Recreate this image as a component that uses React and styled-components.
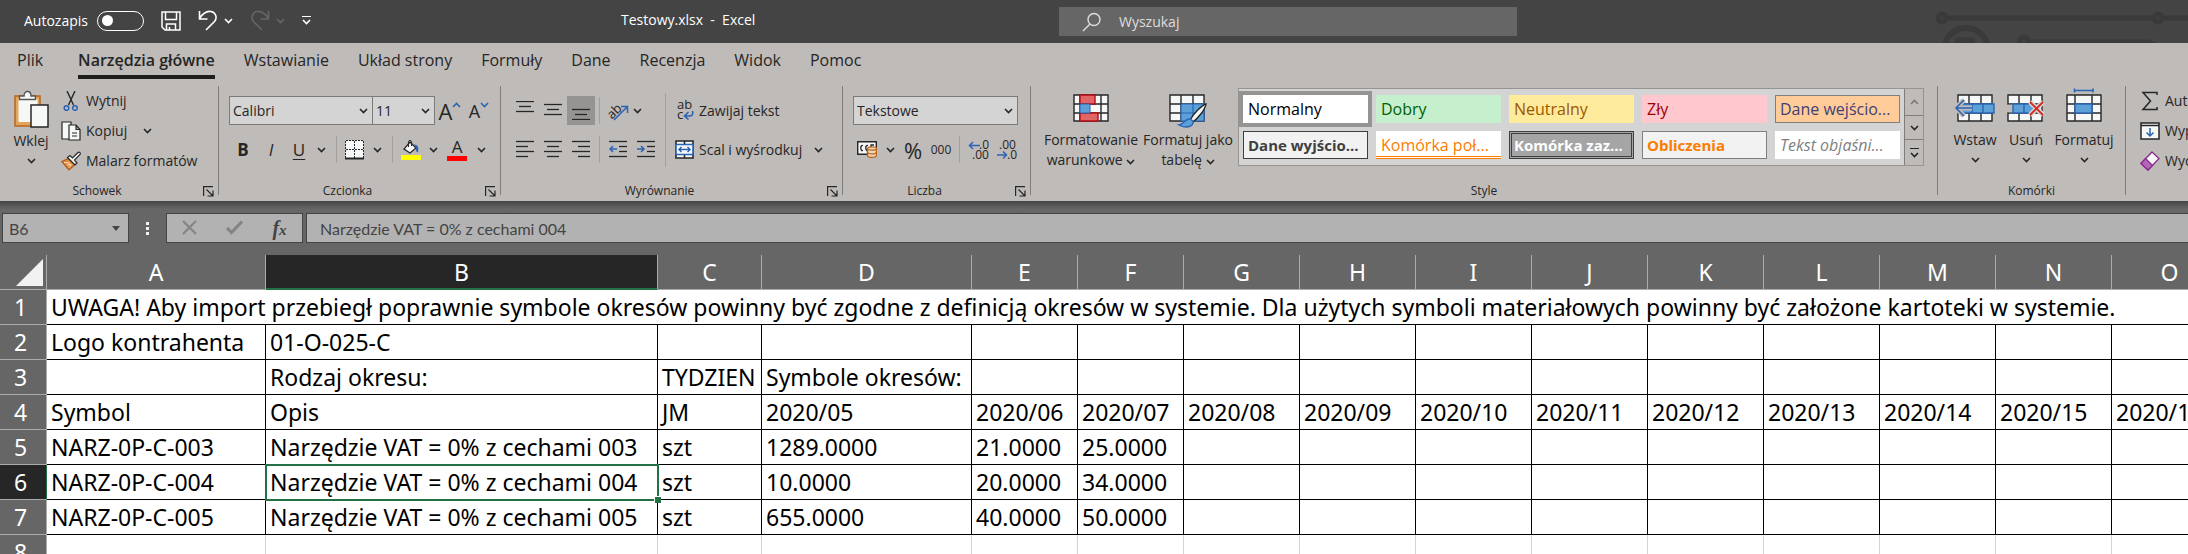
import styled, { createGlobalStyle, css } from "styled-components";

const INK = "#262626";
const BLUE = "#2b64b5";

const columns = [
  { name: "A", width: 219 },
  { name: "B", width: 392 },
  { name: "C", width: 104 },
  { name: "D", width: 210 },
  { name: "E", width: 106 },
  { name: "F", width: 106 },
  ..."GHIJKLMNO".split("").map((name) => ({ name, width: 116 })),
];

const note =
  "UWAGA! Aby import przebiegł poprawnie symbole okresów powinny być zgodne z definicją okresów w systemie. Dla użytych symboli materiałowych powinny być założone kartoteki w systemie.";

const rows = [
  ["Logo kontrahenta", "01-O-025-C"],
  ["", "Rodzaj okresu:", "TYDZIEN", "Symbole okresów:"],
  [
    "Symbol",
    "Opis",
    "JM",
    ...Array.from({ length: 12 }, (_, i) => `2020/${String(i + 5).padStart(2, "0")}`),
  ],
  ["NARZ-0P-C-003", "Narzędzie VAT = 0% z cechami 003", "szt", "1289.0000", "21.0000", "25.0000"],
  ["NARZ-0P-C-004", "Narzędzie VAT = 0% z cechami 004", "szt", "10.0000", "20.0000", "34.0000"],
  ["NARZ-0P-C-005", "Narzędzie VAT = 0% z cechami 005", "szt", "655.0000", "40.0000", "50.0000"],
];

const tabs = [
  "Plik",
  "Narzędzia główne",
  "Wstawianie",
  "Układ strony",
  "Formuły",
  "Dane",
  "Recenzja",
  "Widok",
  "Pomoc",
];

const cellStyles = [
  { label: "Normalny", color: "#000", bg: "#fff", selected: true },
  { label: "Dobry", color: "#006100", bg: "#c6efce" },
  { label: "Neutralny", color: "#9c5700", bg: "#ffeb9c" },
  { label: "Zły", color: "#9c0006", bg: "#ffc7ce" },
  { label: "Dane wejścio...", color: "#3f3f76", bg: "#ffcc99", frame: "1px solid #7f7f7f" },
  { label: "Dane wyjścio...", color: "#3f3f3f", bg: "#f2f2f2", frame: "1px solid #3f3f3f", bold: true },
  { label: "Komórka poł...", color: "#fa7d00", bg: "#fff", underline: true },
  { label: "Komórka zaz...", color: "#fff", bg: "#a5a5a5", frame: "3px double #3f3f3f", bold: true },
  { label: "Obliczenia", color: "#fa7d00", bg: "#f2f2f2", frame: "1px solid #7f7f7f", bold: true },
  { label: "Tekst objaśni...", color: "#7f7f7f", bg: "#fff", italic: true },
];

function Chevron({ color = INK, up }) {
  return (
    <svg width="9" height="6" viewBox="0 0 9 6" fill="none" stroke={color} strokeWidth="1.6">
      <path d={up ? "M1 5l3.5-3.5L8 5" : "M1 1l3.5 3.5L8 1"} />
    </svg>
  );
}

function SaveIcon() {
  return (
    <svg width="20" height="20" viewBox="0 0 20 20" fill="none" stroke="#fff" strokeWidth="1.5">
      <path d="M1 1h18v18H4l-3-3zM4.500 1v7.500h11V1M5.500 19v-6h9v6M8.500 19v-3" />
    </svg>
  );
}

function UndoIcon({ flip, color }) {
  return (
    <svg width="20" height="21" viewBox="0 0 20 21" fill="none" stroke={color} strokeWidth="1.6">
      <g transform={flip ? "matrix(-1 0 0 1 20 0)" : undefined}>
        <path d="M1.500 1v8h8M1.500 8.500C5 3 9 .8 13 1.500c5 1 6.500 6.500 3.500 10L8 20" />
      </g>
    </svg>
  );
}

function PasteIcon() {
  return (
    <svg width="36" height="39" viewBox="0 0 36 39">
      <path d="M2 6h25v30H2z" fill="#e3a55c" stroke="#b8661c" strokeWidth="1.5" />
      <path d="M5.500 9h19v23h-19z" fill="#f5f8f7" />
      <path d="M6.500 9.500V6h4.500c0-6 7-6 7 0h4.500v3.500z" fill="#f5f8f7" stroke="#555" strokeWidth="1.400" />
      <path d="M18 15h17v22H18z" fill="#f5f8f7" stroke={INK} strokeWidth="1.500" />
    </svg>
  );
}

function CutIcon() {
  return (
    <svg width="20" height="20" viewBox="0 0 20 20" fill="none">
      <path d="M6 0l6.500 14M14 0L7.500 14" stroke={INK} strokeWidth="1.400" />
      <circle cx="5.500" cy="17" r="2.300" stroke={BLUE} strokeWidth="1.500" />
      <circle cx="14" cy="17" r="2.300" stroke={BLUE} strokeWidth="1.500" />
    </svg>
  );
}

function CopyIcon() {
  return (
    <svg width="20" height="20" viewBox="0 0 20 20" fill="#f5f8f7" stroke={INK} strokeWidth="1.200">
      <path d="M1 1h9v17H1z" />
      <path d="M8 4h7l4 4.500V19H8zM15 4v4.500h4M11 12h5M11 15h5" />
    </svg>
  );
}

function BrushIcon() {
  return (
    <svg width="20" height="20" viewBox="0 0 20 20">
      <path d="M.800 10.500L7.500 7.500l6.500 6-6 5.500z" fill="#e08a3c" stroke="#b05a18" strokeWidth="1.200" />
      <path d="M3 11.500l6 .500M6 14l4-.500M8 16.500l2.500-3" fill="none" stroke="#f5e0c8" />
      <path d="M6.500 6.500l7.500 7.500 2-2-2.500-3 5.500-5.500c1-2-1-3-2-2L11.500 7 9 4.500z" fill="#f5f8f7" stroke={INK} strokeWidth="1.200" />
    </svg>
  );
}

function LauncherIcon() {
  return (
    <svg width="11" height="11" viewBox="0 0 11 11" fill="none" stroke={INK} strokeWidth="1.200">
      <path d="M10 .600H.600V10M3.500 3.500L9.500 9.500M10 4.500V10H4.500" />
    </svg>
  );
}

function BordersIcon() {
  return (
    <svg width="20" height="20" viewBox="0 0 20 20" fill="#f5f8f7" stroke={INK}>
      <path d="M.500 18V.500h18V18M9.500 1v17M1 9.500h17" strokeDasharray="2 1" />
      <path d="M0 18.500h19" strokeWidth="2" />
    </svg>
  );
}

function FillIcon() {
  return (
    <svg width="20" height="20" viewBox="0 0 20 20">
      <path d="M9 2l6 6-6 5-6-4z" fill="#f5f8f7" stroke={INK} strokeWidth="1.300" />
      <path d="M7.500 7V1.500C8 0 10 0 10.500 1.500V6" fill="none" stroke={INK} />
      <path d="M13 4.500c4 0 5 3 4 8-3-1-1-4-3-6z" fill={BLUE} />
      <path d="M0 15h20v5H0z" fill="#ffff00" />
    </svg>
  );
}

/* Three or four horizontal strokes, each given as [x, width] */
function LinesIcon({ lines, start = 1, step = 5, children }) {
  return (
    <svg width="18" height="19" viewBox="0 0 18 19" fill="none" stroke={INK} strokeWidth="1.300">
      {lines.map(([x, w], i) => (
        <path key={i} d={`M${x} ${start + i * step + 0.5}h${w}`} />
      ))}
      {children}
    </svg>
  );
}

function OrientationIcon() {
  return (
    <svg width="22" height="20" viewBox="0 0 22 20" fill="none">
      <text x="0" y="15" fontSize="13" fill={INK} transform="rotate(-45 7 11)">
        ab
      </text>
      <path d="M7 19L20 6M14 5.500h6.500V12" stroke={BLUE} strokeWidth="1.500" />
    </svg>
  );
}

function WrapIcon() {
  return (
    <svg width="19" height="20" viewBox="0 0 19 20" fill="none">
      <text x="2" y="9" fontSize="13" fill={INK}>ab</text>
      <text x="2" y="19" fontSize="13" fill={INK}>c</text>
      <path d="M17.500 11c1 4-1 5-3 5H10M13.500 12L9.500 16l4 3.500" stroke={BLUE} strokeWidth="1.600" />
    </svg>
  );
}

function MergeIcon() {
  return (
    <svg width="19" height="19" viewBox="0 0 19 19" fill="#f5f8f7">
      <path d="M1 1h17v17H1zM9.500 1v17" stroke={INK} strokeWidth="1.600" />
      <path d="M1 4.500h17v10H1z" stroke={BLUE} strokeWidth="1.600" />
      <path d="M4 9.500h11M6.500 7L4 9.500 6.500 12M12.500 7L15 9.500 12.500 12" fill="none" stroke={BLUE} strokeWidth="1.500" />
    </svg>
  );
}

function CurrencyIcon() {
  return (
    <svg width="20" height="17" viewBox="0 0 20 17">
      <path d="M.700 .700h18.600v12.600H.700z" fill="#f5f8f7" stroke={INK} strokeWidth="1.400" />
      <path d="M6 4.500c-3-1-3 6 0 5M11 4.500c-3-1-3 6 0 5M14 10V4h3" fill="none" stroke={INK} strokeWidth="1.300" />
      <path d="M10.500 7.500v7c0 2.500 9 2.500 9 0v-7" fill="#f3d3b0" stroke="#b8661c" strokeWidth="1.300" />
      <path d="M10.500 11c0 2.500 9 2.500 9 0" fill="none" stroke="#b8661c" strokeWidth="1.300" />
      <ellipse cx="15" cy="7.500" rx="4.500" ry="1.600" fill="#f3d3b0" stroke="#b8661c" strokeWidth="1.300" />
    </svg>
  );
}

function DecimalIcon({ less }) {
  return (
    <svg width="21" height="20" viewBox="0 0 21 20" fill="none">
      <text x={less ? 3 : 11} y="9" fontSize="12" fill={INK}>{less ? ".00" : ".0"}</text>
      <text x={less ? 11 : 4} y="19" fontSize="12" fill={INK}>{less ? ".0" : ".00"}</text>
      <path
        d={less ? "M1 15h10M7 11.500L10.500 15 7 18.500" : "M1.500 5.500H12M5 2L1.500 5.500 5 9"}
        stroke={BLUE}
        strokeWidth="1.500"
      />
    </svg>
  );
}

const Sheet = ({ x = 1, y = 7 }) => (
  <path
    d={`M${x} ${y}h34v26h-34zM${x} ${y + 9}h34M${x} ${y + 18}h34M${x + 11} ${y}v26M${x + 23} ${y}v26`}
    fill="#f5f8f7"
    stroke={INK}
    strokeWidth="1.400"
  />
);

function ConditionalIcon() {
  return (
    <svg width="36" height="40" viewBox="0 0 36 40">
      <path
        d="M1 7h34v26H1zM1 16h34M1 25h34M7 7v26M28 7v26"
        fill="#f5f8f7"
        stroke={INK}
        strokeWidth="1.400"
      />
      <path d="M7 7h15v9H7zM7 25h18v8H7z" fill="#e06666" stroke="#b00c14" strokeWidth="1.400" />
      <path d="M7 16h10v9H7z" fill="#5ca0d8" stroke={BLUE} />
    </svg>
  );
}

function TableFormatIcon() {
  return (
    <svg width="38" height="40" viewBox="0 0 38 40">
      <Sheet />
      <path d="M12 16h23v17H12zM12 25h23M24 16v17" fill="#5ca0d8" stroke={BLUE} strokeWidth="1.200" />
      <path d="M37 16c-4 1-12 9-16 16l3 2c5-4 12-12 13-18z" fill="#f5f8f7" stroke={INK} strokeWidth="1.400" />
      <path d="M21 31c-5-1-6 6-11 6 5 3 15 3 14-4z" fill="#5ca0d8" stroke={BLUE} strokeWidth="1.400" />
    </svg>
  );
}

function InsertIcon() {
  return (
    <svg width="42" height="40" viewBox="0 0 42 40">
      <Sheet x={4} />
      <path d="M8 16h32v9H8zM18 16v9M29 16v9" fill="#5ca0d8" stroke={BLUE} strokeWidth="1.400" />
      <path d="M10 12l-8 8 8 8M2 20h16" fill="none" stroke="#bfbbb8" strokeWidth="5" />
      <path d="M10 12l-8 8 8 8M2 20h16" fill="none" stroke={BLUE} strokeWidth="1.600" />
    </svg>
  );
}

function DeleteIcon() {
  return (
    <svg width="38" height="40" viewBox="0 0 38 40">
      <Sheet />
      <path d="M0 16.700h6v7.600H0z" fill="#bfbbb8" />
      <path d="M6 16h20v9H6zM17 16v9" fill="#5ca0d8" stroke={BLUE} strokeWidth="1.400" />
      <path d="M23 14l13 13M36 14L23 27" stroke="#d8d4d1" strokeWidth="5" />
      <path d="M23 14l13 13M36 14L23 27" stroke="#d0291f" strokeWidth="1.800" />
    </svg>
  );
}

function FormatIcon() {
  return (
    <svg width="36" height="40" viewBox="0 0 36 40">
      <path d="M1 7h34v26H1zM1 16h34M1 25h34M9 7v26M26 7v26" fill="#f5f8f7" stroke={INK} strokeWidth="1.400" />
      <path d="M9 16h17v9H9z" fill="#5ca0d8" stroke={BLUE} strokeWidth="1.400" />
      <path d="M8 2.500h19M8.500 .500v4M27 .500v4" fill="none" stroke={BLUE} strokeWidth="1.600" />
    </svg>
  );
}

function SumIcon() {
  return (
    <svg width="20" height="20" viewBox="0 0 20 20" fill="none" stroke={INK} strokeWidth="1.500">
      <path d="M17 4V1.500H3L10.500 10 3 18.500h14V16" />
    </svg>
  );
}

function FillDownIcon() {
  return (
    <svg width="20" height="20" viewBox="0 0 20 20">
      <path d="M1 2h18v16H1zM1 4.500h18" fill="#f5f8f7" stroke={INK} strokeWidth="1.500" />
      <path d="M10 7v8M6.500 11.500L10 15l3.500-3.500" fill="none" stroke={BLUE} strokeWidth="1.500" />
    </svg>
  );
}

function EraserIcon() {
  return (
    <svg width="20" height="20" viewBox="0 0 20 20" stroke="#8a2a8e" strokeWidth="1.300">
      <path d="M12 1l7 6.500L8 19l-7-6.500z" fill="#f5f8f7" />
      <path d="M5.500 7.500l7 7L8 19l-7-6.500z" fill="#b566b8" />
    </svg>
  );
}

function Circuit() {
  return (
    <svg width="252" height="43" viewBox="0 0 252 43" fill="none" stroke="#3a3a3a" strokeWidth="5">
      <path d="M11 18h205M228 18h24" />
      <circle cx="6" cy="18" r="4" />
      <circle cx="222" cy="18" r="4" />
      <circle cx="30" cy="50" r="22" strokeWidth="6" />
      <path d="M19 41h20" strokeWidth="7" />
      <circle cx="88" cy="41" r="4" />
      <path d="M93 42h120l6 3" />
    </svg>
  );
}

function Clipboard() {
  return (
    <Group $width="218px" aria-label="Schowek">
      <Body>
        <BigButton $width={50} $start>
          <PasteIcon />
          <span>Wklej</span>
          <Chevron />
        </BigButton>
        <Stack>
          <TextButton>
            <CutIcon /> Wytnij
          </TextButton>
          <TextButton>
            <CopyIcon /> Kopiuj <Push />
            <Chevron />
          </TextButton>
          <TextButton>
            <BrushIcon /> Malarz formatów
          </TextButton>
        </Stack>
      </Body>
      <GroupLabel label="Schowek" launcher />
    </Group>
  );
}

function FontGroup() {
  return (
    <Group $width="281px">
      <Controls>
        <Row>
          <Select label="Czcionka" value="Calibri" width={144} />
          <Select label="Rozmiar czcionki" value="11" width={63} joined />
          <Tool $width={30} $size={22} aria-label="Zwiększ rozmiar czcionki">
            A<Raised><Chevron color={BLUE} up /></Raised>
          </Tool>
          <Tool $width={28} $size={18} aria-label="Zmniejsz rozmiar czcionki">
            A<Raised><Chevron color={BLUE} /></Raised>
          </Tool>
        </Row>
        <Row>
          <Tool $width={28} $size={17} $bold>B</Tool>
          <Tool $width={28} $size={17} $italic>I</Tool>
          <Tool $width={28} $size={17} $underline>U</Tool>
          <Tool $width={16} aria-label="Więcej podkreśleń"><Chevron /></Tool>
          <Line $before={7} />
          <Tool $width={28} aria-label="Obramowania"><BordersIcon /></Tool>
          <Tool $width={16} aria-label="Więcej obramowań"><Chevron /></Tool>
          <Line $before={7} />
          <Tool $width={28} aria-label="Kolor wypełnienia"><FillIcon /></Tool>
          <Tool $width={16} aria-label="Więcej wypełnień"><Chevron /></Tool>
          <Tool $width={32} $size={17}><FontColor>A</FontColor></Tool>
          <Tool $width={16} aria-label="Więcej kolorów czcionki"><Chevron /></Tool>
        </Row>
      </Controls>
      <GroupLabel label="Czcionka" launcher />
    </Group>
  );
}

function Alignment() {
  return (
    <Group $width="341px">
      <Body>
        <Controls>
          <Row>
            <Tool $width={28} aria-label="Wyrównaj do góry">
              <LinesIcon lines={[[0, 18], [3, 12], [0, 18]]} start={0} />
            </Tool>
            <Tool $width={28} aria-label="Wyrównaj do środka">
              <LinesIcon lines={[[0, 18], [3, 12], [0, 18]]} start={3} />
            </Tool>
            <Tool $width={28} $active aria-label="Wyrównaj do dołu">
              <LinesIcon lines={[[0, 18], [3, 12], [0, 18]]} start={8} />
            </Tool>
            <Line $before={4} />
            <Tool $width={28} aria-label="Orientacja"><OrientationIcon /></Tool>
            <Tool $width={10} aria-label="Więcej orientacji"><Chevron /></Tool>
          </Row>
          <Row>
            <Tool $width={28} aria-label="Wyrównaj do lewej">
              <LinesIcon lines={[[0, 18], [0, 12], [0, 18], [0, 12]]} />
            </Tool>
            <Tool $width={28} aria-label="Wyśrodkuj">
              <LinesIcon lines={[[0, 18], [3, 12], [0, 18], [3, 12]]} />
            </Tool>
            <Tool $width={28} aria-label="Wyrównaj do prawej">
              <LinesIcon lines={[[0, 18], [6, 12], [0, 18], [6, 12]]} />
            </Tool>
            <Line $before={4} />
            <Tool $width={28} aria-label="Zmniejsz wcięcie">
              <LinesIcon lines={[[0, 18], [10, 8], [10, 8], [0, 18]]}>
                <path d="M1 9h7M4 6L1 9l3 3" stroke={BLUE} strokeWidth="1.500" />
              </LinesIcon>
            </Tool>
            <Tool $width={28} aria-label="Zwiększ wcięcie">
              <LinesIcon lines={[[0, 18], [10, 8], [10, 8], [0, 18]]}>
                <path d="M0 9h7M4 6l3 3-3 3" stroke={BLUE} strokeWidth="1.500" />
              </LinesIcon>
            </Tool>
          </Row>
        </Controls>
        <TallLine />
        <Controls $tight>
          <Row>
            <TextButton>
              <WrapIcon /> Zawijaj tekst
            </TextButton>
          </Row>
          <Row>
            <TextButton>
              <MergeIcon /> Scal i wyśrodkuj
            </TextButton>
            <Tool $width={32} aria-label="Więcej opcji scalania"><Chevron /></Tool>
          </Row>
        </Controls>
      </Body>
      <GroupLabel label="Wyrównanie" launcher />
    </Group>
  );
}

function NumberGroup() {
  return (
    <Group $width="187px">
      <Controls>
        <Row>
          <Select label="Format liczb" value="Tekstowe" width={165} />
        </Row>
        <Row>
          <Tool $width={28} aria-label="Format księgowy"><CurrencyIcon /></Tool>
          <Tool $width={18} aria-label="Więcej formatów"><Chevron /></Tool>
          <Tool $width={28} $size={22}>%</Tool>
          <Tool $width={28} $size={12}>000</Tool>
          <Line $before={4} />
          <Tool $width={28} aria-label="Zwiększ dziesiętne"><DecimalIcon /></Tool>
          <Tool $width={28} aria-label="Zmniejsz dziesiętne"><DecimalIcon less /></Tool>
        </Row>
      </Controls>
      <GroupLabel label="Liczba" launcher />
    </Group>
  );
}

function StylesGroup() {
  return (
    <Group $grow>
      <Body>
        <BigButtons>
          <BigButton $width={100}>
            <ConditionalIcon />
            <span>
              Formatowanie
              <br />
              warunkowe <Chevron />
            </span>
          </BigButton>
          <BigButton $width={94}>
            <TableFormatIcon />
            <span>
              Formatuj jako
              <br />
              tabelę <Chevron />
            </span>
          </BigButton>
        </BigButtons>
        <Gallery>
          <Swatches>
            {cellStyles.map((item) => (
              <Swatch key={item.label} $item={item}>
                {item.label}
              </Swatch>
            ))}
          </Swatches>
          <Scroller>
            <ScrollButton aria-label="W górę"><Chevron color="#7a7876" up /></ScrollButton>
            <ScrollButton aria-label="W dół"><Chevron /></ScrollButton>
            <ScrollButton aria-label="Więcej stylów"><Bar /><Chevron /></ScrollButton>
          </Scroller>
        </Gallery>
      </Body>
      <GroupLabel label="Style" />
    </Group>
  );
}

function CellsGroup() {
  return (
    <Group $width="187px">
      <BigButtons $indent={12}>
        <BigButton $width={50}>
          <InsertIcon />
          <span>Wstaw</span>
          <Chevron />
        </BigButton>
        <BigButton $width={52}>
          <DeleteIcon />
          <span>Usuń</span>
          <Chevron />
        </BigButton>
        <BigButton $width={64}>
          <FormatIcon />
          <span>Formatuj</span>
          <Chevron />
        </BigButton>
      </BigButtons>
      <GroupLabel label="Komórki" />
    </Group>
  );
}

function EditGroup() {
  return (
    <Group $width="62px">
      <EditStack>
        <TextButton><SumIcon /> Autosumowanie</TextButton>
        <TextButton><FillDownIcon /> Wypełnij</TextButton>
        <TextButton><EraserIcon /> Wyczyść</TextButton>
      </EditStack>
    </Group>
  );
}

function GroupLabel({ label, launcher }) {
  return (
    <Caption>
      <span>{label}</span>
      {launcher && (
        <Launcher aria-label={`${label} – ustawienia`}>
          <LauncherIcon />
        </Launcher>
      )}
    </Caption>
  );
}

function Select({ label, value, width, joined }) {
  return (
    <SelectBox $width={width} $joined={joined}>
      <select aria-label={label} defaultValue={value}>
        <option>{value}</option>
      </select>
      <SelectArrow>
        <Chevron />
      </SelectArrow>
    </SelectBox>
  );
}

function Spreadsheet() {
  return (
    <SheetArea>
      <Grid>
        <colgroup>
          <Col $width={47} />
          {columns.map((col) => (
            <Col key={col.name} $width={col.width} />
          ))}
        </colgroup>
        <thead>
          <tr>
            <Corner>
              <svg width="28" height="28" viewBox="0 0 28 28">
                <path d="M27 0v27H0z" fill="#f2f2f2" />
              </svg>
            </Corner>
            {columns.map((col) => (
              <ColHead key={col.name} scope="col" $active={col.name === "B"}>
                {col.name}
              </ColHead>
            ))}
          </tr>
        </thead>
        <tbody>
          <tr>
            <RowHead scope="row">1</RowHead>
            <Cell colSpan={columns.length}>{note}</Cell>
          </tr>
          {rows.map((row, i) => (
            <tr key={i}>
              <RowHead scope="row" $active={i === 4}>
                {i + 2}
              </RowHead>
              {columns.map((col, j) => (
                <Cell key={col.name} $active={i === 4 && j === 1}>
                  {row[j]}
                </Cell>
              ))}
            </tr>
          ))}
          <tr>
            <RowHead scope="row">8</RowHead>
            {columns.map((col) => (
              <Cell key={col.name} $blank />
            ))}
          </tr>
        </tbody>
      </Grid>
    </SheetArea>
  );
}

export default function App() {
  return (
    <Window>
      <GlobalStyle />
      <TitleBar>
        <QuickAccess>
          <AutoSave>
            Autozapis
            <Switch type="checkbox" role="switch" />
          </AutoSave>
          <QuickButton aria-label="Zapisz"><SaveIcon /></QuickButton>
          <QuickButton aria-label="Cofnij">
            <UndoIcon color="#fff" />
            <Chevron color="#fff" />
          </QuickButton>
          <QuickButton aria-label="Ponów" disabled>
            <UndoIcon color="#666" flip />
            <Chevron color="#666" />
          </QuickButton>
          <MoreButton aria-label="Dostosuj pasek">
            <Bar $light />
            <Chevron color="#fff" />
          </MoreButton>
        </QuickAccess>
        <FileName>Testowy.xlsx&nbsp; -&nbsp; Excel</FileName>
        <Search>
          <svg width="20" height="20" viewBox="0 0 20 20" fill="none" stroke="#dedede" strokeWidth="1.400">
            <circle cx="12" cy="7.500" r="6" />
            <path d="M8 12l-7 7" />
          </svg>
          <input type="text" aria-label="Wyszukaj" placeholder="Wyszukaj" />
        </Search>
        <Decoration>
          <Circuit />
        </Decoration>
      </TitleBar>

      <Ribbon>
        <Tabs>
          {tabs.map((tab, i) => (
            <Tab key={tab} $active={i === 1}>
              {tab}
            </Tab>
          ))}
        </Tabs>
        <Groups>
          <Clipboard />
          <Divider />
          <FontGroup />
          <Divider />
          <Alignment />
          <Divider />
          <NumberGroup />
          <Divider />
          <StylesGroup />
          <Divider />
          <CellsGroup />
          <Divider />
          <EditGroup />
        </Groups>
      </Ribbon>

      <FormulaBar>
        <NameBox>
          <input aria-label="Pole nazwy" defaultValue="B6" />
          <svg width="8" height="5" viewBox="0 0 8 5">
            <path d="M0 0h8L4 5z" fill="#444" />
          </svg>
        </NameBox>
        <Dots>
          <i />
          <i />
          <i />
        </Dots>
        <FormulaTools>
          <button aria-label="Anuluj">
            <svg width="17" height="15" viewBox="0 0 17 15" fill="none" stroke="#858585" strokeWidth="2.200">
              <path d="M2 1l13 13M15 1L2 14" />
            </svg>
          </button>
          <button aria-label="Wpis">
            <svg width="17" height="15" viewBox="0 0 17 15" fill="none" stroke="#858585" strokeWidth="3.200">
              <path d="M1 8l4.500 4.500L16 1.500" />
            </svg>
          </button>
          <button aria-label="Wstaw funkcję">
            <Fx>
              f<small>x</small>
            </Fx>
          </button>
        </FormulaTools>
        <FormulaInput aria-label="Pasek formuły" defaultValue="Narzędzie VAT = 0% z cechami 004" />
      </FormulaBar>

      <Spreadsheet />
    </Window>
  );
}

const GlobalStyle = createGlobalStyle`
  * {
    box-sizing: border-box;
  }
  body {
    margin: 0;
  }
  button,
  input,
  select {
    font: inherit;
    color: inherit;
    background: none;
    border: none;
    padding: 0;
    margin: 0;
    outline: none;
  }
  svg {
    flex: none;
  }
`;

const Window = styled.div`
  height: 100vh;
  display: flex;
  flex-direction: column;
  overflow: hidden;
  background: #666;
  color: ${INK};
  font-family: "Open Sans", "Noto Sans", sans-serif;
  font-size: 14px;
`;

const TitleBar = styled.header`
  flex: none;
  height: 43px;
  display: grid;
  grid-template-columns: 621fr 438fr 458fr 671fr;
  align-items: center;
  background: #444;
  color: #fff;
`;

const QuickAccess = styled.div`
  display: flex;
  align-items: center;
  gap: 17px;
  padding: 0 0 2px 24px;
`;

const AutoSave = styled.label`
  display: flex;
  align-items: center;
  gap: 9px;
`;

const Switch = styled.input`
  appearance: none;
  width: 47px;
  height: 20px;
  border: 1px solid #fff;
  border-radius: 10px;
  display: flex;
  align-items: center;
  padding-left: 4px;

  &::before {
    content: "";
    width: 11px;
    height: 11px;
    border-radius: 50%;
    background: #fff;
  }
`;

const QuickButton = styled.button`
  display: flex;
  align-items: center;
  gap: 6px;
`;

const MoreButton = styled.button`
  display: flex;
  flex-direction: column;
  align-items: center;
  gap: 2px;
`;

const Bar = styled.i`
  width: 9px;
  height: 1px;
  background: ${({ $light }) => ($light ? "#fff" : INK)};
`;

const FileName = styled.span`
  line-height: 20px;
  padding-bottom: 3px;
`;

const Search = styled.div`
  height: 29px;
  display: flex;
  align-items: center;
  gap: 17px;
  padding-left: 23px;
  background: #666;

  input {
    flex: 1;
    min-width: 0;
  }
  input::placeholder {
    color: #dedede;
    opacity: 1;
  }
`;

const Decoration = styled.div`
  display: flex;
  justify-content: flex-end;
`;

const Ribbon = styled.section`
  flex: none;
  height: 158px;
  background: #bfbbb8;
`;

const Tabs = styled.nav`
  height: 43px;
  display: flex;
  align-items: flex-start;
  gap: 29px;
  padding-left: 17px;
`;

const Tab = styled.button`
  height: 36px;
  padding: 0 0 2px;
  font-size: 16px;
  line-height: 26px;

  ${({ $active }) =>
    $active &&
    css`
      margin-left: 6px;
      padding: 2px 0 0;
      font-weight: 600;
      border-bottom: 4px solid #1e1e1e;
    `}
`;

const Groups = styled.div`
  display: flex;
  align-items: flex-start;
`;

const Divider = styled.i`
  flex: none;
  width: 1px;
  height: 109px;
  background: #807d7b;
`;

const Group = styled.section`
  height: 115px;
  min-width: 0;
  display: flex;
  flex-direction: column;
  justify-content: space-between;
  overflow: hidden;
  flex: ${({ $grow, $width }) => ($grow ? "1" : `0 0 ${$width}`)};
`;

const Body = styled.div`
  display: flex;
`;

const Controls = styled.div`
  display: flex;
  flex-direction: column;
  gap: 10px;
  padding: 10px 0 0 ${({ $tight }) => ($tight ? 5 : 10)}px;
`;

const Row = styled.div`
  height: 29px;
  display: flex;
  align-items: center;
`;

const Stack = styled.div`
  display: flex;
  flex-direction: column;
  padding-left: 5px;
`;

const EditStack = styled(Stack)`
  padding-left: 14px;
`;

const TextButton = styled.button`
  height: 30px;
  display: flex;
  align-items: center;
  gap: 5px;
  padding-bottom: 1px;
  white-space: nowrap;
`;

const Push = styled.i`
  width: 6px;
`;

const BigButtons = styled.div`
  display: flex;
  padding-left: ${({ $indent }) => $indent || 10}px;
`;

const BigButton = styled.button`
  width: ${({ $width }) => $width}px;
  display: flex;
  flex-direction: column;
  align-items: center;
  gap: 2px;
  line-height: 20px;
  white-space: nowrap;
  margin-left: ${({ $start }) => ($start ? 6 : 0)}px;
  padding-top: ${({ $start }) => ($start ? 4 : 2)}px;

  > span + svg {
    margin-top: 5px;
  }
`;

const Tool = styled.button`
  width: ${({ $width }) => $width}px;
  height: 29px;
  display: flex;
  align-items: center;
  justify-content: center;
  line-height: 24px;
  font-size: ${({ $size }) => $size || 14}px;
  font-weight: ${({ $bold }) => ($bold ? 700 : 400)};
  font-style: ${({ $italic }) => ($italic ? "italic" : "normal")};
  text-decoration: ${({ $underline }) => ($underline ? "underline" : "none")};
  text-underline-offset: 3px;
  background: ${({ $active }) => ($active ? "#969492" : "none")};
`;

const Raised = styled.span`
  height: 24px;
  display: flex;
  align-items: flex-start;
  padding-top: 3px;
`;

const FontColor = styled.span`
  width: 20px;
  line-height: 18px;
  text-align: center;
  border-bottom: 5px solid #f00;
`;

const Line = styled.i`
  width: 1px;
  height: 27px;
  margin: 0 4px 0 ${({ $before }) => $before}px;
  background: #a3a09d;
`;

const TallLine = styled(Line)`
  height: 74px;
  margin: 7px 4px 0 5px;
`;

const SelectBox = styled.div`
  position: relative;
  width: ${({ $width }) => $width}px;
  height: 29px;
  margin-left: ${({ $joined }) => ($joined ? -1 : 0)}px;
  border: 1px solid #7d7b79;
  background: #d4d4d4;

  select {
    appearance: none;
    width: 100%;
    height: 100%;
    padding-left: 3px;
  }
`;

const SelectArrow = styled.span`
  position: absolute;
  right: 4px;
  top: 0;
  height: 100%;
  display: flex;
  align-items: center;
  pointer-events: none;
`;

const Caption = styled.div`
  display: flex;
  align-items: center;
  font-size: 12px;
  line-height: 20px;

  span {
    flex: 1;
    text-align: center;
  }
`;

const Launcher = styled.button`
  width: 24px;
  display: flex;
  justify-content: flex-end;
  padding-right: 4px;
`;

const Gallery = styled.div`
  flex: 1;
  min-width: 0;
  height: 78px;
  display: flex;
  margin: 2px 13px 0 3px;
  border: 1px solid #969492;
  background: #d4d4d4;
`;

const Swatches = styled.div`
  flex: 1;
  display: grid;
  grid-template-columns: repeat(5, minmax(0, 1fr));
  grid-auto-rows: 28px;
  gap: 8px;
  padding: 6px 4px;
`;

const Swatch = styled.button`
  padding: 0 0 0 5px;
  text-align: left;
  white-space: nowrap;
  font-size: ${({ $item }) => ($item.bold ? 15 : 16)}px;
  line-height: 24px;
  color: ${({ $item }) => $item.color};
  background: ${({ $item }) => $item.bg};
  outline: ${({ $item }) => $item.frame || "none"};
  outline-offset: ${({ $item }) => ($item.frame?.startsWith("3px") ? -3 : -1)}px;
  font-weight: ${({ $item }) => ($item.bold ? 700 : 400)};
  font-style: ${({ $item }) => ($item.italic ? "italic" : "normal")};

  ${({ $item }) =>
    $item.selected &&
    css`
      box-shadow: 0 0 0 4px #969492;
    `}
  ${({ $item }) =>
    $item.underline &&
    css`
      box-shadow:
        inset 0 -1px #fa7d00,
        inset 0 -2px #fff,
        inset 0 -3px #fa7d00;
    `}
`;

const Scroller = styled.div`
  width: 19px;
  display: grid;
  grid-template-rows: 26px 24px 26px;
  border-left: 1px solid #807d7b;
`;

const ScrollButton = styled.button`
  display: flex;
  flex-direction: column;
  align-items: center;
  justify-content: center;
  gap: 3px;
  background: #bfbbb8;

  & + & {
    border-top: 1px solid #807d7b;
  }
`;

const FormulaBar = styled.div`
  flex: none;
  height: 54px;
  display: flex;
  padding: 12px 0 12px 2px;
  color: #444;
  background: linear-gradient(#444, #666 8px);
  font-family: "Lato", sans-serif;
  font-size: 16px;
`;

const Field = css`
  border: 1px solid #444;
  background: #b2b2b2;
`;

const NameBox = styled.div`
  ${Field}
  width: 127px;
  display: flex;
  align-items: center;
  padding: 0 8px 0 6px;

  input {
    flex: 1;
    min-width: 0;
  }
`;

const Dots = styled.div`
  width: 37px;
  display: flex;
  flex-direction: column;
  align-items: center;
  justify-content: center;
  gap: 2px;

  i {
    width: 3px;
    height: 3px;
    background: #f2f2f2;
  }
`;

const FormulaTools = styled.div`
  ${Field}
  width: 137px;
  display: grid;
  grid-template-columns: repeat(3, 1fr);
  margin-right: 3px;
`;

const Fx = styled.span`
  font-family: "Liberation Serif", serif;
  font-style: italic;
  font-weight: 700;
  font-size: 20px;

  small {
    font-size: 15px;
  }
`;

const FormulaInput = styled.input`
  ${Field}
  flex: 1;
  min-width: 0;
  padding-left: 13px;
  border-right: none;
`;

const SheetArea = styled.main`
  flex: 1;
  min-height: 0;
  overflow: hidden;
`;

const Grid = styled.table`
  table-layout: fixed;
  width: 0;
  border-collapse: separate;
  border-spacing: 0;
  font-family: "Noto Sans", "Open Sans", sans-serif;
  font-size: 23px;
  line-height: 34px;
`;

const Col = styled.col`
  width: ${({ $width }) => $width}px;
`;

const heading = css`
  height: 35px;
  padding: 0;
  font-weight: 400;
  text-align: center;
  color: #fff;
  background: #666;
  border-right: 1px solid #ababab;
  border-bottom: 1px solid #ababab;
`;

const Corner = styled.th`
  ${heading}
  padding: 2px 2px 0 0;
  text-align: right;
  line-height: 0;
`;

const ColHead = styled.th`
  ${heading}
  background: ${({ $active }) => ($active ? INK : "#666")};
  box-shadow: ${({ $active }) => ($active ? "inset 0 -1px #217346" : "none")};
  border-bottom-color: ${({ $active }) => ($active ? "#217346" : "#ababab")};
`;

const RowHead = styled.th`
  ${heading}
  padding-right: 5px;
  background: ${({ $active }) => ($active ? INK : "#666")};
  border-right-color: ${({ $active }) => ($active ? "#217346" : "#ababab")};
`;

const Cell = styled.td`
  position: relative;
  height: 35px;
  padding: 0 0 0 4px;
  white-space: nowrap;
  color: #000;
  background: #fff;
  border-right: 1px solid ${({ $blank }) => ($blank ? "#d4d4d4" : "#000")};
  border-bottom: 1px solid ${({ $blank }) => ($blank ? "#d4d4d4" : "#000")};

  ${({ $active }) =>
    $active &&
    css`
      z-index: 1;
      outline: 2px solid #217346;
      outline-offset: -1px;

      &::after {
        content: "";
        position: absolute;
        right: -4px;
        bottom: -4px;
        width: 6px;
        height: 6px;
        background: #217346;
        border: solid #fff;
        border-width: 1px 0 0 1px;
      }
    `}
`;
